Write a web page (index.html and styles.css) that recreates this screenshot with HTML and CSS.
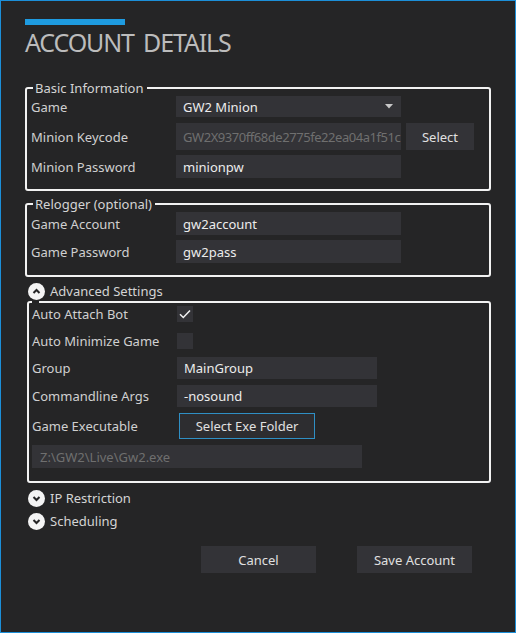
FILE: index.html
```html
<!DOCTYPE html>
<html>
<head>
<meta charset="utf-8">
<link rel="stylesheet" href="styles.css">
</head>
<body>
<div class="window">
  <div class="accent"></div>
  <h1 class="title">ACCOUNT DETAILS</h1>

  <fieldset class="group group-basic">
    <legend>Basic Information</legend>
    <div class="row row-h21">
      <span class="lbl">Game</span>
      <div class="field combo">
        <span>GW2 Minion</span>
        <svg class="caret" width="8" height="5" viewBox="0 0 8 5"><path d="M0 0H8L4 4.5Z" fill="#c8c8c8"/></svg>
      </div>
    </div>
    <div class="row row-h27 gap6">
      <span class="lbl">Minion Keycode</span>
      <div class="field disabled field-key">GW2X9370ff68de2775fe22ea04a1f51c</div>
      <button class="btn btn-select">Select</button>
    </div>
    <div class="row row-h23 gap5">
      <span class="lbl">Minion Password</span>
      <div class="field">minionpw</div>
    </div>
  </fieldset>

  <fieldset class="group group-relog">
    <legend>Relogger (optional)</legend>
    <div class="row row-h23">
      <span class="lbl">Game Account</span>
      <div class="field">gw2account</div>
    </div>
    <div class="row row-h23 gap5">
      <span class="lbl">Game Password</span>
      <div class="field">gw2pass</div>
    </div>
  </fieldset>

  <div class="expander exp-first">
    <svg class="exp-icon" width="17" height="17" viewBox="0 0 17 17"><circle cx="8.5" cy="8.5" r="8.5" fill="#f4f4f4"/><path d="M5.5 10L8.5 7L11.5 10" fill="none" stroke="#252526" stroke-width="2"/></svg>
    <span>Advanced Settings</span>
  </div>

  <fieldset class="group group-adv">
    <legend class="legend-empty"></legend>
    <div class="row row-h21">
      <span class="lbl">Auto Attach Bot</span>
      <div class="check"><svg width="12" height="10" viewBox="0 0 12 10"><path d="M1 5.2L4.3 8.5L11 1.5" fill="none" stroke="#f2f2f2" stroke-width="1.5"/></svg></div>
    </div>
    <div class="row row-h22 gap6">
      <span class="lbl">Auto Minimize Game</span>
      <div class="check"></div>
    </div>
    <div class="row row-h22 gap5">
      <span class="lbl">Group</span>
      <div class="field field-adv">MainGroup</div>
    </div>
    <div class="row row-h22 gap6">
      <span class="lbl">Commandline Args</span>
      <div class="field field-adv">-nosound</div>
    </div>
    <div class="row row-h26 gap6">
      <span class="lbl">Game Executable</span>
      <button class="btn btn-folder">Select Exe Folder</button>
    </div>
    <div class="row row-h23 gap6">
      <div class="field disabled field-path">Z:\GW2\Live\Gw2.exe</div>
    </div>
  </fieldset>

  <div class="expander exp-ip">
    <svg class="exp-icon" width="17" height="17" viewBox="0 0 17 17"><circle cx="8.5" cy="8.5" r="8.5" fill="#f4f4f4"/><path d="M5.5 7L8.5 10L11.5 7" fill="none" stroke="#252526" stroke-width="2"/></svg>
    <span>IP Restriction</span>
  </div>
  <div class="expander exp-sched">
    <svg class="exp-icon" width="17" height="17" viewBox="0 0 17 17"><circle cx="8.5" cy="8.5" r="8.5" fill="#f4f4f4"/><path d="M5.5 7L8.5 10L11.5 7" fill="none" stroke="#252526" stroke-width="2"/></svg>
    <span>Scheduling</span>
  </div>

  <div class="actions">
    <button class="btn btn-action">Cancel</button>
    <button class="btn btn-action">Save Account</button>
  </div>
</div>
</body>
</html>
```

FILE: styles.css
```css
* { box-sizing: border-box; }
html, body {
  margin: 0;
  padding: 0;
  background: #252526;
}
body {
  font-family: "Noto Sans", "Open Sans", sans-serif;
  font-size: 13px;
  color: #d4d4d4;
}
.window {
  width: 516px;
  height: 633px;
  border: 1px solid #1c8fd8;
  background: #252526;
  padding: 0 0 0 24px;
  overflow: hidden;
}
.accent {
  width: 100px;
  height: 6px;
  background: #1e9be0;
  margin-top: 18px;
}
.title {
  margin: 2px 0 23px 0;
  font-size: 25px;
  line-height: 30px;
  font-weight: 400;
  color: #bcbcbc;
  letter-spacing: -1.15px;
  word-spacing: 4px;
}
.group {
  margin: 0;
  width: 466px;
  border: 2px solid #f2f2f2;
  border-radius: 3px;
  padding: 0 0 11px 4px;
  min-width: 0;
}
.group legend {
  font-size: 13px;
  line-height: 16px;
  padding: 0 3px 0 2px;
  margin-left: 2px;
  color: #d4d4d4;
}
.group-relog {
  margin-top: 5px;
  padding-bottom: 12px;
}
.group-adv {
  margin-left: 2px;
  width: 464px;
  padding: 0 0 13px 3px;
}
.group-adv .legend-empty {
  width: 7px;
  height: 2px;
  padding: 0;
  margin-left: 0;
  font-size: 0;
  line-height: 0;
}
.row {
  display: flex;
  align-items: center;
}
.row-h21 { height: 21px; }
.row-h22 { height: 22px; }
.row-h23 { height: 23px; }
.row-h26 { height: 26px; }
.row-h27 { height: 27px; }
.gap5 { margin-top: 5px; }
.gap6 { margin-top: 6px; }
.lbl {
  width: 145px;
  flex: none;
  color: #d0d0d0;
}
.field {
  width: 225px;
  height: 100%;
  background: #333337;
  color: #ececec;
  padding: 0 7px;
  display: flex;
  align-items: center;
  white-space: nowrap;
  overflow: hidden;
}
.field.disabled { color: #6f6f6f; }
.field-key { letter-spacing: -0.45px; }
.combo {
  justify-content: space-between;
  padding-right: 8px;
}
.caret { flex: none; }
.field-adv { width: 200px; }
.field-path {
  width: 330px;
  padding-left: 8px;
}
.check {
  width: 16px;
  height: 16px;
  background: #333337;
  display: flex;
  align-items: center;
  justify-content: center;
}
.btn {
  font-family: inherit;
  font-size: 13px;
  color: #e0e0e0;
  background: #333337;
  border: none;
  padding: 0;
  margin: 0;
}
.btn-select {
  width: 68px;
  height: 100%;
  margin-left: 5px;
}
.btn-folder {
  width: 136px;
  height: 26px;
  margin-left: 2px;
  border: 1px solid #2f8fc4;
  background: #2d2d30;
}
.expander {
  display: flex;
  align-items: center;
  height: 20px;
  padding-left: 3px;
  gap: 5px;
  color: #d4d4d4;
}
.exp-icon { flex: none; }
.exp-first { margin-top: 4px; }
.exp-ip { margin-top: 5px; }
.exp-sched { margin-top: 3px; }
.actions {
  display: flex;
  justify-content: flex-end;
  gap: 41px;
  margin-top: 15px;
  padding-right: 43px;
}
.btn-action {
  width: 115px;
  height: 27px;
}
```
